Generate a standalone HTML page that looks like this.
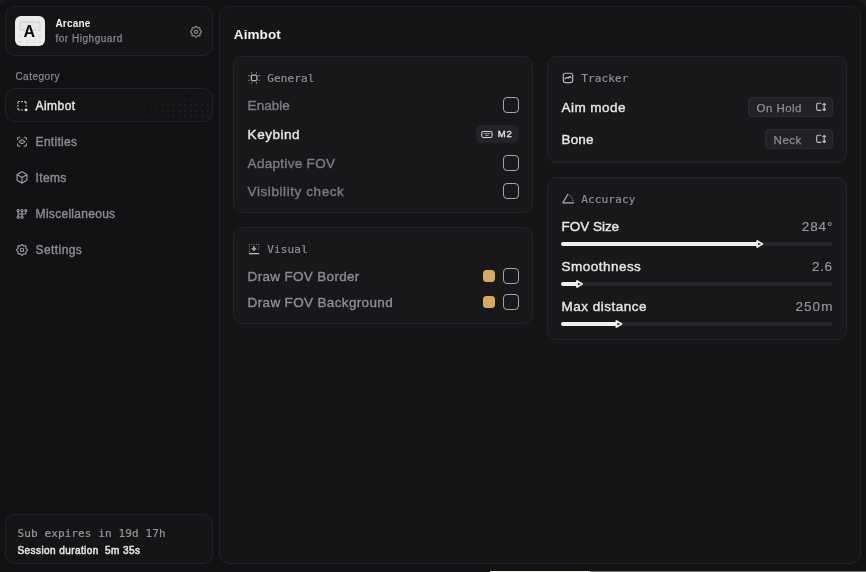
<!DOCTYPE html>
<html lang="en">
<head>
<meta charset="utf-8">
<title>Arcane</title>
<style>
*{box-sizing:border-box;margin:0;padding:0}
html,body{width:866px;height:572px;overflow:hidden;background:#1a1b1d}
body{position:relative;font-family:"Liberation Sans",sans-serif;color:#e8e8ea}
#win{position:absolute;left:0;top:0;width:866px;height:572px;background:#111214;border-radius:11px 11px 0 0 / 8px 8px 0 0}
.abs{position:absolute}
.box{position:absolute;border:1px solid #242528;border-radius:10px}
.t{position:absolute;white-space:nowrap;line-height:20px}
#tx{position:absolute;left:0;top:0;width:866px;height:572px;will-change:transform}
.m{font-family:"DejaVu Sans Mono","Liberation Mono",monospace}
#icons{position:absolute;left:0;top:0;width:866px;height:572px;overflow:visible}
#icons *{stroke-linecap:round;stroke-linejoin:round}
/* sidebar */
#head{left:5px;top:6px;width:208px;height:50px;background:#141517}
#avatar{left:15px;top:16px;width:30px;height:30px;border-radius:6px;background:#ebebeb;overflow:hidden}
#avatar .fr{position:absolute;left:4px;top:5px;width:22px;height:9.500px;border:2px solid #dbdbdb;border-radius:2.500px;background:#e8e8e8}
#avatar i{position:absolute;width:2px;height:2px;border-radius:1px;background:#d6d6d6}
#avatar b{position:absolute;left:-1px;top:7.500px;width:30px;text-align:center;font-size:16px;line-height:16px;font-weight:700;color:#0b0b0c}
#navsel{left:5px;top:88px;width:208px;height:34px;background:#131416;overflow:hidden}
#navsel span{position:absolute;left:-1px;top:-1px;width:208px;height:34px;
  background-image:radial-gradient(circle at 2.850px 2.850px,#222327 0,#222327 .6px,rgba(34,35,39,0) 1.600px);
  background-size:5.700px 5.700px;background-position:1px 2.700px;
  -webkit-mask-image:radial-gradient(ellipse 95px 42px at 100% 100%,#000 0,rgba(0,0,0,.85) 45%,transparent 100%);
  mask-image:radial-gradient(ellipse 95px 42px at 100% 100%,#000 0,rgba(0,0,0,.85) 45%,transparent 100%)}
#foot{left:5px;top:514px;width:208px;height:50px;background:#141517}
/* main */
#panel{left:219px;top:6px;width:642px;height:558px;background:#141517;border-radius:11px}
.card{background:#17181a}
.chk{position:absolute;width:16px;height:16px;border:1.200px solid #a4a5a8;border-radius:4px;background:#18191b}
.sw{position:absolute;width:12px;height:12px;border-radius:3.500px;background:#d9aa5c}
.sel{position:absolute;height:20px;border:1px solid #2c2d30;border-radius:4px;background:#222326}
.track{position:absolute;height:4px;border-radius:2px;background:#252629;left:561px;width:272px}
.fill{position:absolute;height:4px;border-radius:2px;background:#f1f1f1;left:561px}
</style>
</head>
<body>
<div id="win"></div>

<!-- sidebar header -->
<div class="box" id="head"></div>
<div class="abs" id="avatar">
  <span class="fr"></span>
  <i style="left:4px;top:19px"></i><i style="left:24px;top:19px"></i>
  <i style="left:4px;top:25px"></i><i style="left:10.500px;top:25px"></i><i style="left:17.500px;top:25px"></i><i style="left:24px;top:25px"></i>
</div>

<!-- nav selected -->
<div class="box" id="navsel"><span></span></div>

<!-- footer -->
<div class="box" id="foot"></div>

<!-- main panel -->
<div class="box" id="panel"></div>

<!-- cards -->
<div class="box card" style="left:233px;top:56px;width:300px;height:157px"></div>
<div class="box card" style="left:233px;top:227px;width:300px;height:97px"></div>
<div class="box card" style="left:547px;top:56px;width:300px;height:107px"></div>
<div class="box card" style="left:547px;top:177px;width:300px;height:163px"></div>

<!-- general controls -->
<div class="chk" style="left:503px;top:97px"></div>
<div class="chk" style="left:503px;top:155px"></div>
<div class="chk" style="left:503px;top:183px"></div>
<div class="abs" style="left:476px;top:125px;width:43px;height:18px;border-radius:6px;background:#232427"></div>

<!-- visual controls -->
<div class="sw" style="left:483px;top:270px"></div>
<div class="sw" style="left:483px;top:296px"></div>
<div class="chk" style="left:503px;top:268px"></div>
<div class="chk" style="left:503px;top:294px"></div>

<!-- tracker selects -->
<div class="sel" style="left:748px;top:97px;width:85px"></div>
<div class="sel" style="left:765px;top:129px;width:68px"></div>

<!-- sliders -->
<div class="track" style="top:242px"></div><div class="fill" style="top:242px;width:197px"></div>
<div class="track" style="top:282px"></div><div class="fill" style="top:282px;width:17px"></div>
<div class="track" style="top:322px"></div><div class="fill" style="top:322px;width:56px"></div>

<div id="tx">
<div class="t" style="left:55.40px;top:14px;font-size:10px;color:#f0f0f1;font-weight:700;letter-spacing:0.22px">Arcane</div>
<div class="t" style="left:55.40px;top:29px;font-size:10px;color:#88898d;letter-spacing:0.53px;-webkit-text-stroke:.25px">for Highguard</div>
<div class="t" style="left:15.40px;top:67px;font-size:10px;color:#88898d;letter-spacing:0.49px;-webkit-text-stroke:.25px">Category</div>
<div class="t" style="left:35.60px;top:96px;font-size:12px;color:#e8e8ea;letter-spacing:0.43px;-webkit-text-stroke:.38px">Aimbot</div>
<div class="t" style="left:35.60px;top:132px;font-size:12px;color:#8c8d91;letter-spacing:0.29px;-webkit-text-stroke:.38px">Entities</div>
<div class="t" style="left:35.60px;top:168px;font-size:12px;color:#8c8d91;letter-spacing:0.36px;-webkit-text-stroke:.38px">Items</div>
<div class="t" style="left:35.60px;top:204px;font-size:12px;color:#8c8d91;letter-spacing:0.29px;-webkit-text-stroke:.38px">Miscellaneous</div>
<div class="t" style="left:35.60px;top:240px;font-size:12px;color:#8c8d91;letter-spacing:0.41px;-webkit-text-stroke:.38px">Settings</div>
<div class="t m" style="left:17.50px;top:524px;font-size:11px;color:#96979a;letter-spacing:0.11px;-webkit-text-stroke:.2px">Sub expires in 19d 17h</div>
<div class="t" style="left:17.50px;top:541px;font-size:10px;color:#e6e6e8;letter-spacing:0.42px;-webkit-text-stroke:.5px">Session duration&nbsp; 5m 35s</div>
<div class="t" style="left:23.40px;top:22px;font-size:16px;color:#0b0b0c;font-weight:700">A</div>
<div class="t" style="left:233.80px;top:25px;font-size:13.5px;color:#f0f0f1;font-weight:700;letter-spacing:0.10px">Aimbot</div>
<div class="t m" style="left:267.20px;top:69px;font-size:11px;color:#8e8f93;letter-spacing:0.14px;-webkit-text-stroke:.2px">General</div>
<div class="t m" style="left:267.20px;top:240px;font-size:11px;color:#8e8f93;letter-spacing:0.17px;-webkit-text-stroke:.2px">Visual</div>
<div class="t m" style="left:581.20px;top:69px;font-size:11px;color:#8e8f93;letter-spacing:0.14px;-webkit-text-stroke:.2px">Tracker</div>
<div class="t m" style="left:581.20px;top:190px;font-size:11px;color:#8e8f93;letter-spacing:0.17px;-webkit-text-stroke:.2px">Accuracy</div>
<div class="t" style="left:247.60px;top:96px;font-size:13.5px;color:#7b7c80;letter-spacing:0.05px;-webkit-text-stroke:.38px">Enable</div>
<div class="t" style="left:247.60px;top:125px;font-size:13.5px;color:#e8e8ea;letter-spacing:0.53px;-webkit-text-stroke:.38px">Keybind</div>
<div class="t" style="left:247.60px;top:154px;font-size:13.5px;color:#7b7c80;letter-spacing:0.30px;-webkit-text-stroke:.38px">Adaptive FOV</div>
<div class="t" style="left:247.60px;top:182px;font-size:13.5px;color:#7b7c80;letter-spacing:0.58px;-webkit-text-stroke:.38px">Visibility check</div>
<div class="t" style="left:247.60px;top:267px;font-size:13.5px;color:#8c8d91;letter-spacing:0.32px;-webkit-text-stroke:.38px">Draw FOV Border</div>
<div class="t" style="left:247.60px;top:293px;font-size:13.5px;color:#8c8d91;letter-spacing:0.35px;-webkit-text-stroke:.38px">Draw FOV Background</div>
<div class="t" style="left:561.50px;top:98px;font-size:13.5px;color:#e8e8ea;letter-spacing:0.46px;-webkit-text-stroke:.38px">Aim mode</div>
<div class="t" style="left:561.50px;top:130px;font-size:13.5px;color:#e8e8ea;letter-spacing:0.16px;-webkit-text-stroke:.38px">Bone</div>
<div class="t" style="left:561.50px;top:217px;font-size:13.5px;color:#e8e8ea;letter-spacing:-0.02px;-webkit-text-stroke:.38px">FOV Size</div>
<div class="t" style="left:561.50px;top:257px;font-size:13.5px;color:#e8e8ea;letter-spacing:0.48px;-webkit-text-stroke:.38px">Smoothness</div>
<div class="t" style="left:561.50px;top:297px;font-size:13.5px;color:#e8e8ea;letter-spacing:0.49px;-webkit-text-stroke:.38px">Max distance</div>
<div class="t" style="left:756.60px;top:98px;font-size:11.5px;color:#8c8d91;letter-spacing:0.44px;-webkit-text-stroke:.25px">On Hold</div>
<div class="t" style="left:773.60px;top:130px;font-size:11.5px;color:#8c8d91;letter-spacing:0.50px;-webkit-text-stroke:.25px">Neck</div>
<div class="t" style="left:801.80px;top:217px;font-size:13.5px;color:#97989b;letter-spacing:0.89px;-webkit-text-stroke:.15px">284°</div>
<div class="t" style="left:812.00px;top:257px;font-size:13.5px;color:#97989b;letter-spacing:0.61px;-webkit-text-stroke:.15px">2.6</div>
<div class="t" style="left:795.50px;top:297px;font-size:13.5px;color:#97989b;letter-spacing:1.04px;-webkit-text-stroke:.15px">250m</div>
<div class="t" style="left:497.80px;top:124px;font-size:9.5px;color:#e4e4e6;letter-spacing:0.80px;-webkit-text-stroke:.35px">M2</div>
</div>

<svg id="icons" viewBox="0 0 866 572" fill="none">
  <!-- header gear -->
  <g transform="translate(196 31.8)" stroke="#9a9b9e" stroke-width="1.050">
    <path d="M0.00 -5.45L0.52 -5.25L0.95 -4.76L1.28 -4.24L1.63 -3.93L2.09 -3.90L2.69 -4.03L3.35 -4.08L3.85 -3.85L4.08 -3.35L4.03 -2.69L3.90 -2.09L3.93 -1.63L4.24 -1.28L4.76 -0.95L5.25 -0.52L5.45 -0.00L5.25 0.52L4.76 0.95L4.24 1.28L3.93 1.63L3.90 2.09L4.03 2.69L4.08 3.35L3.85 3.85L3.35 4.08L2.69 4.03L2.09 3.90L1.63 3.93L1.28 4.24L0.95 4.76L0.52 5.25L0.00 5.45L-0.52 5.25L-0.95 4.76L-1.28 4.24L-1.63 3.93L-2.09 3.90L-2.69 4.03L-3.35 4.08L-3.85 3.85L-4.08 3.35L-4.03 2.69L-3.90 2.09L-3.93 1.63L-4.24 1.28L-4.76 0.95L-5.25 0.52L-5.45 0.00L-5.25 -0.52L-4.76 -0.95L-4.24 -1.28L-3.93 -1.63L-3.90 -2.09L-4.03 -2.69L-4.08 -3.35L-3.85 -3.85L-3.35 -4.08L-2.69 -4.03L-2.09 -3.90L-1.63 -3.93L-1.28 -4.24L-0.95 -4.76L-0.52 -5.25Z"/><circle r="1.650"/>
  </g>
  <!-- aimbot: dashed square -->
  <g stroke="#d4d4d6" stroke-width="1.05">
    <path d="M17.85 103.2v-.3a1.300 1.300 0 0 1 1.300-1.300h.3M21.55 101.600h.9M24.55 101.600h.3a1.300 1.300 0 0 1 1.300 1.300v.3M26.150 105.300v.9M17.85 105.300v.9M17.85 108.300v.3a1.300 1.300 0 0 0 1.300 1.300h.3M21.55 109.900h.9"/>
    <circle cx="26" cy="109.900" r="1.150" fill="#f0f0f1" stroke="#f0f0f1" stroke-width=".5"/>
  </g>
  <!-- entities: scan eye -->
  <svg x="15.400" y="135.100" width="13.200" height="13.200" viewBox="0 0 24 24" stroke="#a2a3a6" stroke-width="2">
    <path d="M4 8V6a2 2 0 0 1 2-2h2M4 16v2a2 2 0 0 0 2 2h2M16 4h2a2 2 0 0 1 2 2v2M16 20h2a2 2 0 0 0 2-2v-2M7 12c3.333-4.667 6.667-4.667 10 0M7 12c3.333 4.667 6.667 4.667 10 0M12 12h-.01"/>
  </svg>
  <!-- items: box -->
  <svg x="15.400" y="170.800" width="13.200" height="13.200" viewBox="0 0 24 24" stroke="#a2a3a6" stroke-width="2">
    <path d="M21 8a2 2 0 0 0-1-1.730l-7-4a2 2 0 0 0-2 0l-7 4A2 2 0 0 0 3 8v8a2 2 0 0 0 1 1.730l7 4a2 2 0 0 0 2 0l7-4A2 2 0 0 0 21 16Z"/>
    <path d="m3.300 7 8.700 5 8.700-5"/><path d="M12 22V12"/>
  </svg>
  <!-- misc: gearbox -->
  <svg x="15.400" y="207.300" width="13.200" height="13.200" viewBox="0 0 24 24" stroke="#a2a3a6" stroke-width="1.900">
    <circle cx="5" cy="6" r="2"/><circle cx="12" cy="6" r="2"/><circle cx="19" cy="6" r="2"/><circle cx="5" cy="18" r="2"/><circle cx="12" cy="18" r="2"/>
    <path d="M5 8v8M12 8v8M19 8v2a2 2 0 0 1-2 2H5"/>
  </svg>
  <!-- settings gear -->
  <g transform="translate(22 249.900)" stroke="#a2a3a6" stroke-width="1.100">
    <path d="M0.00 -5.45L0.52 -5.25L0.95 -4.76L1.28 -4.24L1.63 -3.93L2.09 -3.90L2.69 -4.03L3.35 -4.08L3.85 -3.85L4.08 -3.35L4.03 -2.69L3.90 -2.09L3.93 -1.63L4.24 -1.28L4.76 -0.95L5.25 -0.52L5.45 -0.00L5.25 0.52L4.76 0.95L4.24 1.28L3.93 1.63L3.90 2.09L4.03 2.69L4.08 3.35L3.85 3.85L3.35 4.08L2.69 4.03L2.09 3.90L1.63 3.93L1.28 4.24L0.95 4.76L0.52 5.25L0.00 5.45L-0.52 5.25L-0.95 4.76L-1.28 4.24L-1.63 3.93L-2.09 3.90L-2.69 4.03L-3.35 4.08L-3.85 3.85L-4.08 3.35L-4.03 2.69L-3.90 2.09L-3.93 1.63L-4.24 1.28L-4.76 0.95L-5.25 0.52L-5.45 0.00L-5.25 -0.52L-4.76 -0.95L-4.24 -1.28L-3.93 -1.63L-3.90 -2.09L-4.03 -2.69L-4.08 -3.35L-3.85 -3.85L-3.35 -4.08L-2.69 -4.03L-2.09 -3.90L-1.63 -3.93L-1.28 -4.24L-0.95 -4.76L-0.52 -5.25Z"/><circle r="1.650"/>
  </g>

  <!-- general: chip -->
  <g stroke="#8a8b8e" stroke-width="1.050">
    <rect x="251.300" y="75.100" width="5.600" height="5.600" rx="1.500" stroke="#b6b7ba" stroke-width="1.300"/>
    <path d="M251.700 72.600v.7M256.500 72.600v.7M251.700 82.500v.7M256.500 82.500v.7M248.600 75.600h.7M248.600 80.200h.7M258.900 75.600h.7M258.900 80.200h.7"/>
  </g>
  <!-- visual: dotted box + sparkle -->
  <g stroke="#9d9ea1" stroke-width="1.150">
    <path d="M249.300 253.600h9.400" stroke="#c2c2c4"/>
    <path d="M249.300 251.400v-7.200h9.400v7.200" stroke-dasharray=".01 2.380"/>
    <path d="M254 246.600q.2 2 2.200 2.200q-2 .2-2.200 2.200q-.2-2-2.200-2.200q2-.2 2.200-2.200z" fill="#a6a7aa" stroke="#a6a7aa" stroke-width=".9"/>
  </g>
  <!-- tracker: chart -->
  <g stroke="#b4b5b8" stroke-width="1.200">
    <rect x="563.350" y="73.250" width="9.300" height="9.300" rx="2"/>
    <path d="M565.100 78.900l1.600-1.500 1.500.8 1.600-1.800 1.200 1.400" stroke-width="1.050" stroke="#cfcfd1"/>
  </g>
  <!-- accuracy: angle -->
  <g stroke="#aeafb2" stroke-width="1.250">
    <path d="M567.900 194.300L562.900 202.800H573.600"/>
    <path d="M569.800 195.300A10 10 0 0 1 572.900 200.700" stroke-dasharray=".01 2.050" stroke-width="1.100" stroke="#9d9ea1"/>
  </g>
  <!-- keyboard -->
  <g stroke="#d6d6d8" stroke-width="1.050">
    <rect x="481.750" y="131.450" width="10.300" height="6" rx="1.500"/>
    <path d="M484 133.600h5.800M485.600 135.500h2.600" stroke-width=".8" stroke="#bdbdc0"/>
  </g>
  <!-- select chevrons -->
  <g stroke="#bfc0c3" stroke-width="1.150">
    <path d="M820.900 103.2h-2.700a1.500 1.500 0 0 0-1.500 1.500v4.200a1.500 1.500 0 0 0 1.500 1.500h2.700"/>
    <path d="M824.200 103.4v7M822.900 104.6l1.300-1.300 1.300 1.300M822.900 109.2l1.300 1.300 1.300-1.300"/>
    <path d="M820.900 135.2h-2.700a1.500 1.500 0 0 0-1.500 1.500v4.200a1.500 1.500 0 0 0 1.500 1.500h2.700"/>
    <path d="M824.200 135.4v7M822.900 136.6l1.300-1.300 1.300 1.300M822.900 141.2l1.300 1.300 1.300-1.300"/>
  </g>
  <!-- slider thumbs -->
  <g stroke="#f1f1f1" stroke-width="1.800" fill="#17181a">
    <path d="M757.200 240.900L762.300 244L757.200 247.100Z"/>
    <path d="M577 280.900L582.100 284L577 287.100Z"/>
    <path d="M616.400 320.900L621.500 324L616.400 327.100Z"/>
  </g>
</svg>

<!-- bottom strip -->
<div class="abs" style="left:490px;top:571px;width:100px;height:1px;background:#f4f2ea"></div>
<div class="abs" style="left:590px;top:571px;width:276px;height:1px;background:#7d7a78"></div>

</body>
</html>
